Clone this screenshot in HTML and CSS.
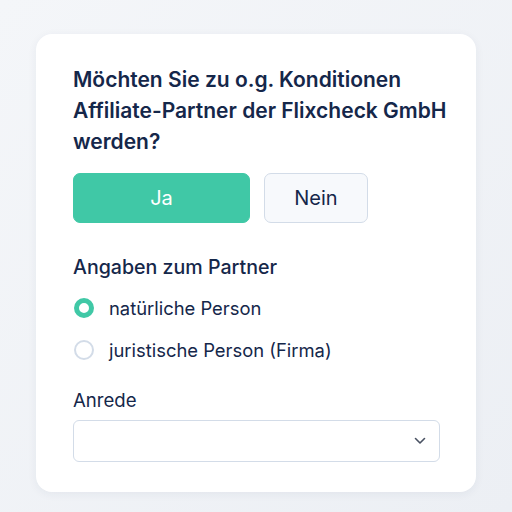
FILE: index.html
```html
<!DOCTYPE html>
<html lang="de">
<head>
<meta charset="utf-8">
<link rel="stylesheet" href="styles.css">
</head>
<body>
<div class="card">
  <h1 class="title">Möchten Sie zu o.g. Konditionen<br>Affiliate-Partner der Flixcheck GmbH<br>werden?</h1>
  <div class="buttons">
    <button class="btn btn-yes">Ja</button>
    <button class="btn btn-no">Nein</button>
  </div>
  <h2 class="section">Angaben zum Partner</h2>
  <div class="radios">
    <label class="radio"><span class="dot dot-on"></span><span>natürliche Person</span></label>
    <label class="radio"><span class="dot"></span><span>juristische Person (Firma)</span></label>
  </div>
  <div class="field-label">Anrede</div>
  <div class="select">
    <svg class="chev" width="12" height="8" viewBox="0 0 12 8"><path d="M1.5 1.5 L6 6 L10.5 1.5" fill="none" stroke="#4a5263" stroke-width="1.6" stroke-linecap="round" stroke-linejoin="round"/></svg>
  </div>
</div>
</body>
</html>
```
FILE: styles.css
```css
* { box-sizing: border-box; }
html, body { margin: 0; height: 100%; }
body {
  background: linear-gradient(135deg, #f4f6f9 0%, #eceff4 100%);
  font-family: Inter, "Noto Sans", sans-serif;
  color: #15274a;
  padding: 34px 36px 0 36px;
}
.card {
  width: 440px;
  height: 458px;
  background: #fff;
  border-radius: 16px;
  box-shadow: 0 2px 10px rgba(30, 45, 80, 0.06);
  padding: 30px 30px 30px 37px;
}
.title {
  margin: 0;
  font-size: 21px;
  line-height: 31px;
  font-weight: 600;
  color: #15274a;
  white-space: nowrap;
}
.buttons {
  display: flex;
  gap: 14px;
  margin-top: 16px;
}
.btn {
  height: 50px;
  border-radius: 7px;
  font-family: Inter, "Noto Sans", sans-serif;
  font-size: 20px;
  font-weight: 400;
  cursor: pointer;
}
.btn-yes {
  width: 177px;
  background: #40c8a6;
  border: 1px solid #40c8a6;
  color: #fff;
}
.btn-no {
  width: 104px;
  background: #f7f9fc;
  border: 1px solid #d3dce8;
  color: #15274a;
}
.section {
  margin: 32px 0 0 0;
  font-size: 19.6px;
  line-height: 24px;
  font-weight: 500;
  color: #15274a;
}
.radios {
  display: flex;
  flex-direction: column;
  gap: 16px;
  margin-top: 16px;
}
.radio {
  display: flex;
  align-items: center;
  gap: 15px;
  height: 26px;
  font-size: 18.4px;
  color: #15274a;
}
.dot {
  width: 20px;
  height: 20px;
  border-radius: 50%;
  border: 2px solid #d3dce8;
  background: #fff;
  margin-left: 1px;
}
.dot-on {
  border: 5px solid #40c8a6;
}
.field-label {
  margin-top: 25px;
  font-size: 18.6px;
  line-height: 24px;
  color: #15274a;
}
.select {
  width: 367px;
  margin-top: 8px;
  height: 42px;
  border: 1px solid #d3dce8;
  border-radius: 6px;
  display: flex;
  align-items: center;
  justify-content: flex-end;
  padding-right: 13px;
}
```
